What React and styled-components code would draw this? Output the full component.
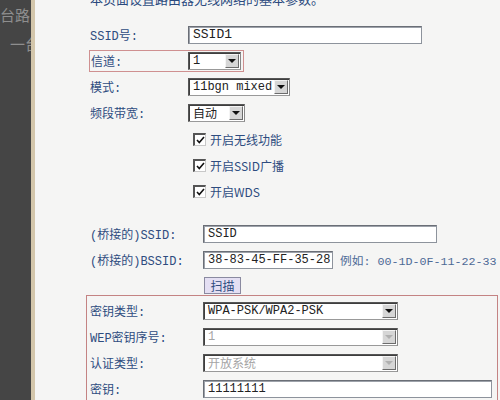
import styled, { createGlobalStyle } from 'styled-components';

const Global = createGlobalStyle`
    html, body {
        margin: 0;
        padding: 0;
        width: 500px;
        height: 400px;
        overflow: hidden;
        background: #f5f5f5;
    }
`;

const Page = styled.div`
    display: flex;
    width: 500px;
    height: 400px;
    overflow: hidden;
    font-family: "Liberation Mono", "Noto Sans CJK SC", monospace;
`;

const SideStrip = styled.div`
    width: 31px;
    flex-shrink: 0;
    background: #454545;
    border-right: 4px solid #d3c6ab;
    overflow: hidden;
    white-space: nowrap;
    font-family: "Noto Sans CJK SC", sans-serif;
    font-size: 15px;
    color: #8e8e8e;
`;

const StripLine = styled.div`
    height: 29px;
    line-height: 29px;
    margin-left: ${p => p.$indent || 0}px;
`;

const Panel = styled.div`
    flex: 1;
    background: #f5f5f4;
    padding: 0 2px 0 51px;
    overflow: hidden;
`;

const Intro = styled.div`
    margin: -8px 0 16px 4px;
    height: 14px;
    line-height: 14px;
    font-family: "Noto Sans CJK SC", sans-serif;
    font-size: 13px;
    color: #2b4a7e;
    white-space: nowrap;
`;

const Row = styled.div`
    display: flex;
    align-items: center;
    height: 26px;
    padding-left: ${p => p.$pad ?? 4}px;
    margin-top: ${p => p.$top || 0}px;
`;

const Label = styled.div`
    width: ${p => p.$w}px;
    flex-shrink: 0;
    font-size: 12px;
    color: #2e4c7f;
    white-space: nowrap;
`;

const Highlight = styled.div`
    display: flex;
    align-items: center;
    height: 20px;
    border: 1px solid #cf9090;
    padding-right: 2px;
    margin-left: -1px;
    & > ${Label} {
        padding-left: 1px;
        width: 97px;
    }
`;

const TextBox = styled.div`
    width: ${p => p.$w}px;
    height: 18px;
    box-sizing: border-box;
    background: #fff;
    border: 1px solid #8d939c;
    border-top-color: #6a6e76;
    border-left-color: #6a6e76;
    box-shadow: inset 1px 1px 0 #9da2aa;
    padding-left: 4px;
    font-size: ${p => p.$fs || 12}px;
    line-height: 16px;
    color: #222;
    white-space: nowrap;
    overflow: hidden;
`;

const SelectBox = styled.div`
    display: flex;
    align-items: center;
    width: ${p => p.$w}px;
    height: 18px;
    box-sizing: border-box;
    background: #fff;
    border: 1px solid #555;
    border-right-color: #888;
    border-bottom-color: #999;
    box-shadow: inset 1px 1px 0 #3e3e3e;
    font-size: 12px;
    color: ${p => (p.$disabled ? '#a5a5a5' : '#222')};
`;

const SelectText = styled.span`
    flex: 1;
    padding-left: 4px;
    white-space: nowrap;
    overflow: hidden;
`;

const ArrowButton = styled.span`
    width: 14px;
    height: 14px;
    margin-right: 1px;
    flex-shrink: 0;
    box-sizing: border-box;
    background: #d6d6d6;
    border: 1px solid #f4f4f4;
    border-right-color: #6c6c6c;
    border-bottom-color: #6c6c6c;
    display: flex;
    align-items: center;
    justify-content: center;
    &::after {
        content: '';
        border-left: 4px solid transparent;
        border-right: 4px solid transparent;
        border-top: 4px solid ${p => (p.$disabled ? '#b0b0b0' : '#111')};
    }
`;

const CheckRow = styled.label`
    display: flex;
    align-items: center;
    height: 26px;
    padding-left: 107px;
    gap: 4px;
    font-family: "Noto Sans CJK SC", sans-serif;
    font-size: 12px;
    color: #2e4c7f;
`;

const CheckBox = styled.span`
    width: 13px;
    height: 13px;
    box-sizing: border-box;
    background: #fff;
    border: 1px solid #c8c8c8;
    border-top: 2px solid #555;
    border-left: 2px solid #555;
    display: flex;
    align-items: center;
    justify-content: center;
`;

const Hint = styled.span`
    margin-left: 7px;
    font-size: 11.7px;
    color: #4d6a96;
    white-space: nowrap;
`;

const ScanRow = styled.div`
    display: flex;
    align-items: flex-end;
    height: 22px;
    padding-left: 118px;
`;

const ScanButton = styled.button`
    height: 17px;
    width: 37px;
    margin-bottom: 1px;
    padding: 0;
    background: #e4dff3;
    border: 1px solid #8a8aa0;
    font-family: "Noto Sans CJK SC", sans-serif;
    font-size: 12px;
    line-height: 14px;
    color: #2e4c7f;
`;

const SecurityBox = styled.div`
    border: 1px solid #c48383;
    padding: 2px 0 0 3px;
    height: 130px;
`;

function Select({ w, value, disabled }) {
    return (
        <SelectBox $w={w} $disabled={disabled}>
            <SelectText>{value}</SelectText>
            <ArrowButton $disabled={disabled} />
        </SelectBox>
    );
}

function Check({ children }) {
    return (
        <CheckRow>
            <CheckBox>
                <svg width="9" height="8" viewBox="0 0 9 8">
                    <path d="M1 4 L3.3 6.5 L8 1" fill="none" stroke="#111" strokeWidth="1.6" />
                </svg>
            </CheckBox>
            {children}
        </CheckRow>
    );
}

export default function App() {
    return (
        <>
            <Global />
            <Page>
                <SideStrip>
                    <StripLine>台路由</StripLine>
                    <StripLine $indent={10}>一台</StripLine>
                </SideStrip>
                <Panel>
                    <Intro>本页面设置路由器无线网络的基本参数。</Intro>

                    <Row>
                        <Label $w={98}>SSID号:</Label>
                        <TextBox $w={234} $fs={13}>SSID1</TextBox>
                    </Row>
                    <Row>
                        <Highlight>
                            <Label $w={98}>信道:</Label>
                            <Select w={53} value="1" />
                        </Highlight>
                    </Row>
                    <Row>
                        <Label $w={98}>模式:</Label>
                        <Select w={102} value="11bgn mixed" />
                    </Row>
                    <Row>
                        <Label $w={98}>频段带宽:</Label>
                        <Select w={57} value="自动" />
                    </Row>

                    <Check>开启无线功能</Check>
                    <Check>开启SSID广播</Check>
                    <Check>开启WDS</Check>

                    <Row $top={17}>
                        <Label $w={113}>(桥接的)SSID:</Label>
                        <TextBox $w={234}>SSID</TextBox>
                    </Row>
                    <Row>
                        <Label $w={113}>(桥接的)BSSID:</Label>
                        <TextBox $w={130}>38-83-45-FF-35-28</TextBox>
                        <Hint>例如: 00-1D-0F-11-22-33</Hint>
                    </Row>
                    <ScanRow>
                        <ScanButton>扫描</ScanButton>
                    </ScanRow>

                    <SecurityBox>
                        <Row $pad={0}>
                            <Label $w={113}>密钥类型:</Label>
                            <Select w={195} value="WPA-PSK/WPA2-PSK" />
                        </Row>
                        <Row $pad={0}>
                            <Label $w={113}>WEP密钥序号:</Label>
                            <Select w={195} value="1" disabled />
                        </Row>
                        <Row $pad={0}>
                            <Label $w={113}>认证类型:</Label>
                            <Select w={195} value="开放系统" disabled />
                        </Row>
                        <Row $pad={0}>
                            <Label $w={113}>密钥:</Label>
                            <TextBox $w={289}>11111111</TextBox>
                        </Row>
                    </SecurityBox>
                </Panel>
            </Page>
        </>
    );
}
